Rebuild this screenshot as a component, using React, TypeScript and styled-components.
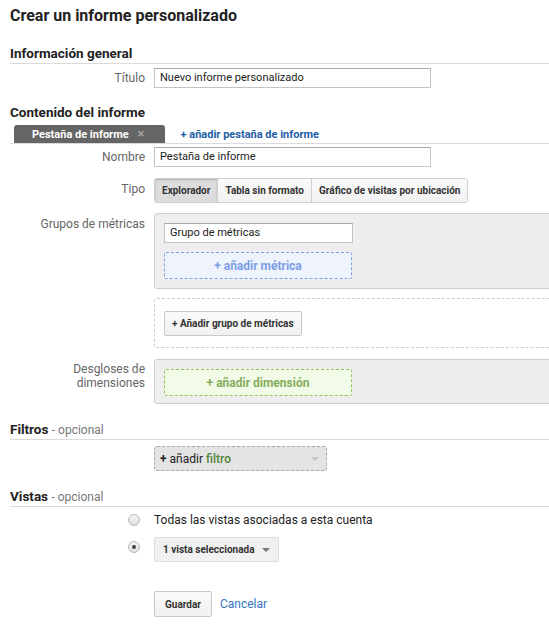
import React from "react";
import styled, { createGlobalStyle } from "styled-components";

const GlobalStyle = createGlobalStyle`
  body {
    margin: 0;
    background: #fff;
    font-family: Roboto, "Liberation Sans", Arial, sans-serif;
    color: #222;
    overflow: hidden;
  }
`;

const Page = styled.div`
  padding-top: 7px;
  width: 549px;
  overflow: hidden;
`;

const Title = styled.h1`
  margin: 0 0 0 10px;
  font-size: 16px;
  line-height: 18px;
  font-weight: 700;
  color: #222;
`;

const SectionHeader = styled.div<{ $mt: number; $line?: boolean }>`
  margin: ${(p) => p.$mt}px 0 0 10px;
  font-size: 13.5px;
  line-height: 16px;
  font-weight: 700;
  color: #222;
  padding-bottom: ${(p) => (p.$line ? 2 : 0)}px;
  border-bottom: ${(p) => (p.$line ? "1px solid #dadada" : "none")};
`;

const Optional = styled.span`
  font-size: 12px;
  line-height: 1;
  font-weight: 400;
  color: #777;
`;

const Row = styled.div<{ $mt: number }>`
  display: grid;
  grid-template-columns: 145px 1fr;
  column-gap: 9px;
  margin-top: ${(p) => p.$mt}px;
`;

const Label = styled.div<{ $pt?: number; $lh?: number }>`
  text-align: right;
  font-size: 12px;
  line-height: ${(p) => p.$lh ?? 20}px;
  padding-top: ${(p) => p.$pt ?? 0}px;
  color: #666;
`;

const TextInput = styled.div<{ $w: number }>`
  box-sizing: border-box;
  width: ${(p) => p.$w}px;
  height: 20px;
  border: 1px solid #c4c4c4;
  border-top-color: #a8a8a8;
  background: #fff;
  padding: 0 5px;
  font-size: 11px;
  line-height: 18px;
  color: #222;
`;

const TabStrip = styled.div`
  display: flex;
  align-items: center;
  margin: 5px 0 0 10px;
  border-bottom: 1px solid #dadada;
`;

const Tab = styled.div`
  display: flex;
  align-items: center;
  height: 18px;
  margin-left: 4px;
  padding: 0 20px 0 18px;
  background: #656565;
  border-radius: 3px 3px 0 0;
  color: #fff;
  font-size: 11px;
  font-weight: 700;
`;

const TabClose = styled.span`
  margin-left: 8px;
  color: #a9a9a9;
  font-size: 9px;
  font-weight: 700;
`;

const AddTab = styled.span`
  margin-left: 16px;
  color: #1d5ea8;
  font-size: 11px;
  font-weight: 700;
`;

const Segmented = styled.div`
  display: inline-flex;
  height: 25px;
  box-sizing: border-box;
  border: 1px solid #cfcfcf;
  border-radius: 3px;
  overflow: hidden;
  justify-self: start;
`;

const Segment = styled.div<{ $active?: boolean }>`
  display: flex;
  align-items: center;
  padding: 0 7px;
  font-size: 10px;
  font-weight: 700;
  color: #333;
  white-space: nowrap;
  background: ${(p) =>
    p.$active ? "#dcdcdc" : "linear-gradient(#fafafa, #f1f1f1)"};
  box-shadow: ${(p) => (p.$active ? "inset 0 1px 2px rgba(0,0,0,0.2)" : "none")};
  & + & {
    border-left: 1px solid #cfcfcf;
  }
`;

const GreyPanel = styled.div<{ $h: number }>`
  box-sizing: border-box;
  width: 420px;
  height: ${(p) => p.$h}px;
  background: #eee;
  border: 1px solid #cfcfcf;
  border-radius: 3px;
  padding: 9px 0 0 9px;
  display: flex;
  flex-direction: column;
  gap: 9px;
`;

const DashedPanel = styled.div`
  box-sizing: border-box;
  width: 420px;
  height: 50px;
  border: 1px dashed #cdcdcd;
  border-radius: 3px;
  padding: 12px 0 0 9px;
`;

const DropZone = styled.div<{ $tone: "blue" | "green" }>`
  box-sizing: border-box;
  width: 188px;
  height: 27px;
  display: flex;
  align-items: center;
  justify-content: center;
  font-size: 12px;
  font-weight: 700;
  border: 1px dashed ${(p) => (p.$tone === "blue" ? "#7f9fe9" : "#93c25f")};
  background: ${(p) => (p.$tone === "blue" ? "#eef3fe" : "#f2fbe8")};
  color: ${(p) => (p.$tone === "blue" ? "#7c9de6" : "#86ad5d")};
  border-radius: 2px;
`;

const Button = styled.div<{ $h: number; $px: number }>`
  display: inline-flex;
  align-items: center;
  justify-content: center;
  box-sizing: border-box;
  height: ${(p) => p.$h}px;
  padding: 0 ${(p) => p.$px}px;
  border: 1px solid #c8c8c8;
  border-radius: 2px;
  background: linear-gradient(#fafafa, #f1f1f1);
  font-size: 10px;
  font-weight: 700;
  color: #333;
  white-space: nowrap;
`;

const FilterBox = styled.div`
  box-sizing: border-box;
  width: 173px;
  height: 25px;
  display: flex;
  align-items: center;
  padding: 0 7px 0 5px;
  background: #e4e4e4;
  border: 1px dashed #a9a9a9;
  border-radius: 3px;
  font-size: 12px;
  color: #222;
`;

const Plus = styled.b`
  margin-right: 3px;
`;

const Green = styled.span`
  margin-left: 3px;
  color: #55853a;
  font-weight: 500;
`;

const Caret = styled.span<{ $color: string }>`
  margin-left: auto;
  width: 0;
  height: 0;
  border-left: 4px solid transparent;
  border-right: 4px solid transparent;
  border-top: 4px solid ${(p) => p.$color};
`;

const RadioCell = styled.div<{ $pt: number }>`
  display: flex;
  justify-content: flex-end;
  padding: ${(p) => p.$pt}px 5px 0 0;
`;

const Radio = styled.span<{ $checked?: boolean }>`
  position: relative;
  box-sizing: border-box;
  width: 12px;
  height: 12px;
  border-radius: 50%;
  border: 1px solid #b8b8b8;
  background: linear-gradient(#f2f2f2, #e0e0e0);
  &::after {
    content: "";
    display: ${(p) => (p.$checked ? "block" : "none")};
    position: absolute;
    left: 3px;
    top: 3px;
    width: 4px;
    height: 4px;
    border-radius: 50%;
    background: #444;
  }
`;

const RadioText = styled.div`
  font-size: 12px;
  line-height: 16px;
  color: #222;
`;

const Select = styled.div`
  box-sizing: border-box;
  width: 125px;
  height: 25px;
  display: flex;
  align-items: center;
  padding: 0 8px 0 8px;
  background: #f1f1f1;
  border: 1px solid #dcdcdc;
  border-radius: 2px;
  font-size: 10px;
  font-weight: 700;
  color: #333;
  white-space: nowrap;
`;

const Actions = styled.div`
  display: flex;
  align-items: center;
  gap: 8px;
`;

const Link = styled.span`
  font-size: 12px;
  color: #3574c2;
`;

export default function App() {
  return (
    <Page>
      <GlobalStyle />
      <Title>Crear un informe personalizado</Title>

      <SectionHeader $mt={20} $line>
        Información general
      </SectionHeader>
      <Row $mt={4}>
        <Label>Título</Label>
        <TextInput $w={277}>Nuevo informe personalizado</TextInput>
      </Row>

      <SectionHeader $mt={16}>Contenido del informe</SectionHeader>
      <TabStrip>
        <Tab>
          Pestaña de informe<TabClose>✕</TabClose>
        </Tab>
        <AddTab>+ añadir pestaña de informe</AddTab>
      </TabStrip>
      <Row $mt={3}>
        <Label>Nombre</Label>
        <TextInput $w={277}>Pestaña de informe</TextInput>
      </Row>
      <Row $mt={11}>
        <Label $pt={4} $lh={14}>
          Tipo
        </Label>
        <Segmented>
          <Segment $active>Explorador</Segment>
          <Segment>Tabla sin formato</Segment>
          <Segment>Gráfico de visitas por ubicación</Segment>
        </Segmented>
      </Row>
      <Row $mt={10}>
        <Label $pt={4} $lh={14}>
          Grupos de métricas
        </Label>
        <GreyPanel $h={76}>
          <TextInput $w={189}>Grupo de métricas</TextInput>
          <DropZone $tone="blue">+ añadir métrica</DropZone>
        </GreyPanel>
      </Row>
      <Row $mt={9}>
        <div />
        <DashedPanel>
          <Button $h={25} $px={7}>
            + Añadir grupo de métricas
          </Button>
        </DashedPanel>
      </Row>
      <Row $mt={11}>
        <Label $pt={3} $lh={14}>
          Desgloses de
          <br />
          dimensiones
        </Label>
        <GreyPanel $h={45}>
          <DropZone $tone="green">+ añadir dimensión</DropZone>
        </GreyPanel>
      </Row>

      <SectionHeader $mt={17} $line>
        Filtros <Optional>- opcional</Optional>
      </SectionHeader>
      <Row $mt={6}>
        <div />
        <FilterBox>
          <Plus>+</Plus>añadir<Green>filtro</Green>
          <Caret $color="#c4c4c4" />
        </FilterBox>
      </Row>

      <SectionHeader $mt={17} $line>
        Vistas <Optional>- opcional</Optional>
      </SectionHeader>
      <Row $mt={5}>
        <RadioCell $pt={2}>
          <Radio />
        </RadioCell>
        <RadioText>Todas las vistas asociadas a esta cuenta</RadioText>
      </Row>
      <Row $mt={9}>
        <RadioCell $pt={4}>
          <Radio $checked />
        </RadioCell>
        <Select>
          1 vista seleccionada
          <Caret $color="#777" />
        </Select>
      </Row>
      <Row $mt={29}>
        <div />
        <Actions>
          <Button $h={26} $px={10}>
            Guardar
          </Button>
          <Link>Cancelar</Link>
        </Actions>
      </Row>
    </Page>
  );
}
